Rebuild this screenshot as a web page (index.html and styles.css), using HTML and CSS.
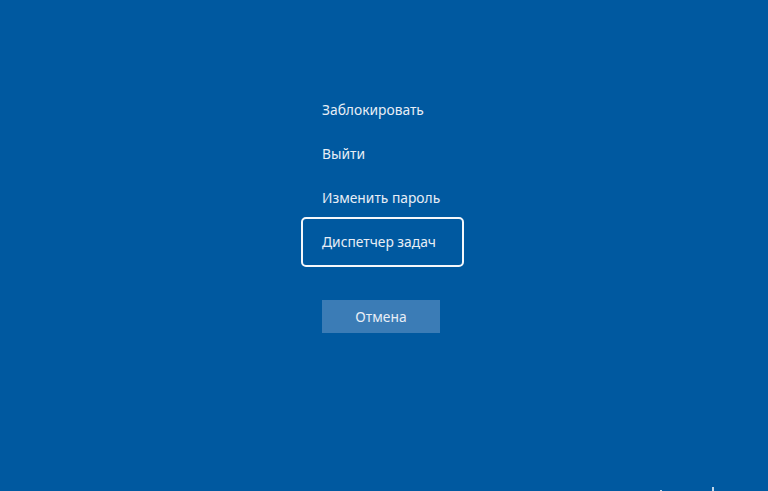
FILE: index.html
```html
<!DOCTYPE html>
<html lang="ru">
<head>
    <meta charset="UTF-8">
    <meta name="viewport" content="width=device-width, initial-scale=1.0">
    <title>Параметры безопасности</title>
    <link rel="stylesheet" href="styles.css">
</head>
<body>

    <div class="screen">
        <ul class="menu">
            <li class="menu-item">Заблокировать</li>
            <li class="menu-item">Выйти</li>
            <li class="menu-item">Изменить пароль</li>
            <li class="menu-item focused">Диспетчер задач</li>
        </ul>

        <button class="cancel">Отмена</button>
    </div>

    <div class="tray">
        <svg class="tray-icon net" width="14" height="10" viewBox="0 0 14 10">
            <path d="M7 3 V10 M4 6 H10" stroke="#fff" stroke-width="1.5" fill="none"/>
        </svg>
        <svg class="tray-icon power" width="14" height="10" viewBox="0 0 14 10">
            <path d="M7 0 V10 M3 6 H11" stroke="#fff" stroke-width="1.5" fill="none"/>
        </svg>
    </div>

</body>
</html>
```

FILE: styles.css
```css
html, body {
    height: 100%;
}

body {
    margin: 0;
    background-color: #0059a0;
    font-family: "Noto Sans", "Open Sans", sans-serif;
    color: #e8eef6;
    overflow: hidden;
}

.screen {
    padding-top: 88px;
    padding-left: 304px;
}

/* --- Menu list --- */
.menu {
    list-style: none;
    margin: 0;
    padding: 0;
}

.menu-item {
    width: 157px;
    height: 44px;
    line-height: 44px;
    padding-left: 18px;
    box-sizing: border-box;
    font-size: 13.8px;
    border-radius: 2px;
}

.focused {
    outline: 2px solid #f4f7fb;
    outline-offset: 1px;
}

/* --- Cancel button --- */
.cancel {
    margin-top: 36px;
    margin-left: 18px;
    width: 118px;
    height: 33px;
    border: none;
    background-color: #3b7cb6;
    color: #e8eef6;
    font-family: inherit;
    font-size: 13.8px;
}

/* --- Tray icons, cut off at the bottom --- */
.tray {
    position: absolute;
    right: 48px;
    bottom: -6px;
    display: flex;
    gap: 38px;
}
```
